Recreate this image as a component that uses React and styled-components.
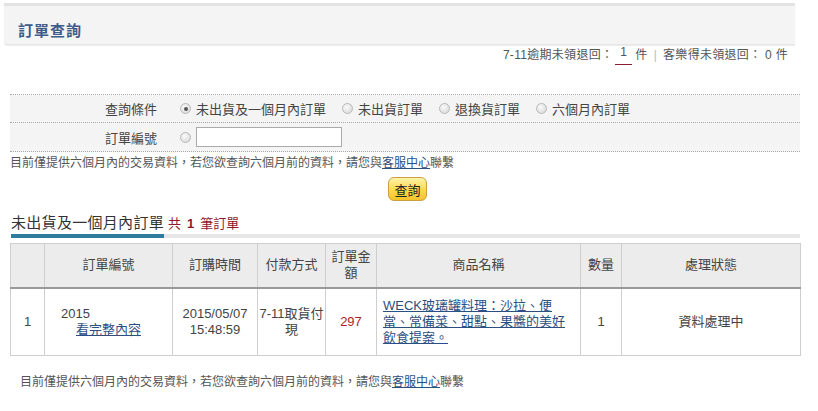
import styled, { createGlobalStyle } from "styled-components";

const GlobalStyle = createGlobalStyle`
  body {
    margin: 0;
    background: #fff;
    font-family: "Liberation Sans", "Noto Sans CJK TC", sans-serif;
    color: #444;
  }
`;

const Page = styled.div`
  width: 818px;
  height: 411px;
  overflow: hidden;
  padding-top: 3px;
  box-sizing: border-box;
`;

const Header = styled.div`
  margin: 0 23px 0 4px;
  border-top: 3px solid #e3e3e3;
  background: #f4f4f4;
  height: 42px;
  border-bottom: 1px solid #e6e6e6;
  border-radius: 0 0 0 4px;
  box-shadow: 0 1px 1px #ececec;
  display: flex;
  align-items: flex-end;
  padding: 0 0 3px 14px;
  box-sizing: border-box;
`;

const Title = styled.h1`
  margin: 0;
  font-size: 15px;
  font-weight: bold;
  color: #3d5c8c;
  letter-spacing: 1px;
  line-height: 20px;
`;

const Stats = styled.div`
  display: flex;
  justify-content: flex-end;
  padding: 0 30px 0 0;
  font-size: 12px;
  letter-spacing: 0.3px;
  color: #555;
  height: 20px;
  line-height: 20px;
`;

const Num = styled.span`
  display: inline-block;
  padding: 0 5px;
  border-bottom: 1px solid #8b2030;
  line-height: 14px;
  margin: 0 3px 0 2px;
`;

const Sep = styled.span`
  color: #bbb;
  margin: 0 6px;
`;

const Form = styled.div`
  margin: 29px 18px 0 10px;
  border-top: 1px dotted #aaa;
`;

const FormRow = styled.div`
  display: flex;
  align-items: center;
  height: 27px;
  background: #f4f4f4;
  border-bottom: 1px dotted #aaa;
  font-size: 13px;
  color: #444;
  & + & {
    height: 28px;
  }
`;

const Label = styled.div`
  width: 170px;
  text-align: right;
  padding-right: 23px;
  box-sizing: border-box;
  flex-shrink: 0;
`;

const Option = styled.label`
  display: flex;
  align-items: center;
  margin-right: 16px;
`;

const Radio = styled.span`
  width: 11px;
  height: 11px;
  border-radius: 50%;
  border: 1px solid #b8b8b8;
  background: radial-gradient(circle at 40% 35%, #fafafa, #d4d4d4);
  margin-right: 5px;
  display: inline-flex;
  align-items: center;
  justify-content: center;
  box-sizing: border-box;
  flex-shrink: 0;
  &::after {
    content: "";
    width: 4px;
    height: 4px;
    border-radius: 50%;
    background: ${(p) => (p.$checked ? "#555" : "transparent")};
  }
`;

const Input = styled.input`
  width: 146px;
  height: 20px;
  border: 1px solid #aaa;
  box-sizing: border-box;
  padding: 0;
  background: #fff;
`;

const Note = styled.p`
  margin: ${(p) => p.$margin || "0"};
  font-size: 12px;
  color: #555;
  line-height: 18px;
`;

const Link = styled.a`
  color: #2b4f80;
  text-decoration: underline;
`;

const ButtonRow = styled.div`
  display: flex;
  justify-content: center;
  padding: 5px 0 0 0;
  margin-left: -3px;
`;

const QueryButton = styled.button`
  font-family: inherit;
  font-size: 13px;
  color: #222;
  padding: 0 5px;
  height: 24px;
  border: 1px solid #c9a040;
  border-radius: 6px;
  background: linear-gradient(#fff3a8, #ffd84a 55%, #f7c22a);
`;

const SectionHead = styled.div`
  display: flex;
  align-items: flex-end;
  margin: 12px 18px 0 11px;
  border-bottom: 4px solid #e6e6e6;
`;

const SectionTitle = styled.div`
  font-size: 15px;
  letter-spacing: 0.3px;
  color: #333;
  padding-bottom: 1px;
  margin-bottom: -4px;
  border-bottom: 4px solid #2e7c9e;
  line-height: 20px;
  white-space: nowrap;
`;

const Count = styled.span`
  font-size: 13px;
  color: #8b1a2c;
  margin-left: 4px;
  align-self: center;
  padding-bottom: 2px;
  b {
    margin: 0 6px;
    font-family: "Liberation Sans", sans-serif;
  }
`;

const Table = styled.table`
  margin: 5px 18px 0 10px;
  width: 790px;
  border-collapse: collapse;
  table-layout: fixed;
  font-size: 13px;
  color: #444;
`;

const Th = styled.th`
  box-sizing: border-box;
  width: ${(p) => p.$w}px;
  height: 44px;
  background: #ececec;
  border: 1px solid #cfcfcf;
  border-bottom: 2px solid #999;
  font-weight: normal;
  line-height: 16px;
  padding: 0 4px;
`;

const Td = styled.td`
  height: 66px;
  border: 1px solid #cfcfcf;
  text-align: ${(p) => p.$align || "center"};
  padding: ${(p) => p.$pad || "0 4px"};
  line-height: 16px;
  color: ${(p) => p.$color || "#444"};
  vertical-align: middle;
`;

const OrderNo = styled.div`
  text-align: left;
  padding-left: 12px;
`;

const cols = [
  ["", 34],
  ["訂單編號", 128],
  ["訂購時間", 85],
  ["付款方式", 68],
  ["訂單金額", 51],
  ["商品名稱", 204],
  ["數量", 41],
  ["處理狀態", 179],
];

export default function App() {
  return (
    <Page>
      <GlobalStyle />
      <Header>
        <Title>訂單查詢</Title>
      </Header>
      <Stats>
        7-11逾期未領退回：<Num>1</Num>件<Sep>|</Sep>客樂得未領退回： 0 件
      </Stats>
      <Form>
        <FormRow>
          <Label>查詢條件</Label>
          <Option><Radio $checked />未出貨及一個月內訂單</Option>
          <Option><Radio />未出貨訂單</Option>
          <Option><Radio />退換貨訂單</Option>
          <Option><Radio />六個月內訂單</Option>
        </FormRow>
        <FormRow>
          <Label>訂單編號</Label>
          <Radio />
          <Input />
        </FormRow>
      </Form>
      <Note $margin="2px 0 0 10px">
        目前僅提供六個月內的交易資料，若您欲查詢六個月前的資料，請您與<Link>客服中心</Link>聯繫
      </Note>
      <ButtonRow>
        <QueryButton>查詢</QueryButton>
      </ButtonRow>
      <SectionHead>
        <SectionTitle>未出貨及一個月內訂單</SectionTitle>
        <Count>共<b>1</b>筆訂單</Count>
      </SectionHead>
      <Table>
        <thead>
          <tr>
            {cols.map(([t, w]) => (
              <Th key={t + w} $w={w}>{t}</Th>
            ))}
          </tr>
        </thead>
        <tbody>
          <tr>
            <Td>1</Td>
            <Td>
              <OrderNo>2015</OrderNo>
              <Link>看完整內容</Link>
            </Td>
            <Td>2015/05/07<br />15:48:59</Td>
            <Td $pad="0">7-11取貨付現</Td>
            <Td $color="#b0202a">297</Td>
            <Td $align="left" $pad="0 12px 0 6px">
              <Link>WECK玻璃罐料理：沙拉、便當、常備菜、甜點、果醬的美好飲食提案。</Link>
            </Td>
            <Td>1</Td>
            <Td>資料處理中</Td>
          </tr>
        </tbody>
      </Table>
      <Note $margin="17px 0 0 20px">
        目前僅提供六個月內的交易資料，若您欲查詢六個月前的資料，請您與<Link>客服中心</Link>聯繫
      </Note>
    </Page>
  );
}
